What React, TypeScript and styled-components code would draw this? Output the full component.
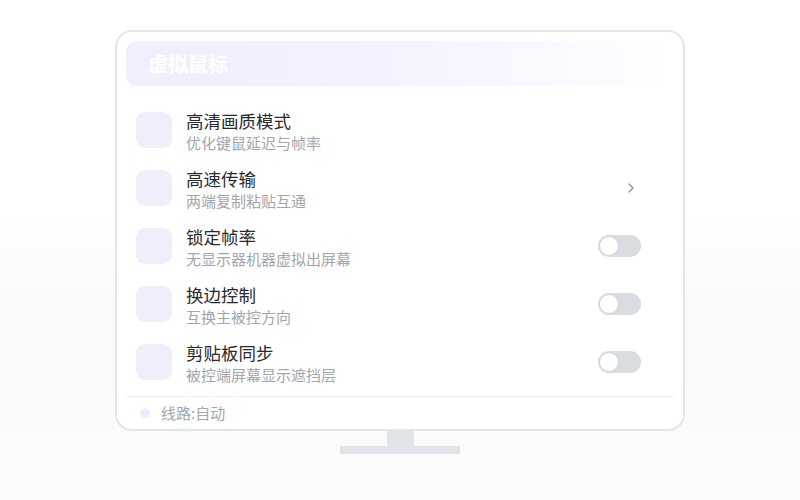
import React from "react";
import styled, { createGlobalStyle } from "styled-components";
import { ChevronRight } from "lucide-react";

const GlobalStyle = createGlobalStyle`
  html, body { margin: 0; padding: 0; }
  body {
    width: 800px;
    height: 500px;
    overflow: hidden;
    font-family: "Noto Sans CJK SC", "Noto Sans", sans-serif;
    background: linear-gradient(180deg, #ffffff 0%, #ffffff 42%, #f9f9fa 62%, #fafafa 85%, #fcfcfc 100%);
  }
`;

const Page = styled.div`
  display: flex;
  flex-direction: column;
  align-items: center;
  padding-top: 30px;
`;

const Monitor = styled.div`
  box-sizing: border-box;
  width: 570px;
  height: 401px;
  border: 2px solid #e3e5e9;
  border-radius: 17px;
  background: #ffffff;
  padding: 9px;
  display: flex;
  flex-direction: column;
`;

const Header = styled.div`
  height: 45px;
  flex: none;
  border-radius: 11px;
  background: linear-gradient(90deg, #f1eefd 0%, #f4f2fe 45%, #faf9ff 80%, #ffffff 100%);
  display: flex;
  align-items: center;
  padding-left: 22px;
`;

const HeaderTitle = styled.div`
  color: #ffffff;
  font-size: 20px;
  font-weight: 700;
`;

const List = styled.div`
  display: flex;
  flex-direction: column;
  padding-top: 15px;
`;

const Row = styled.div`
  height: 58px;
  display: flex;
  align-items: center;
  padding: 0 33px 0 10px;
`;

const IconBox = styled.div`
  width: 36px;
  height: 36px;
  border-radius: 9px;
  background: #f1eefc;
  flex: none;
`;

const TextBlock = styled.div`
  flex: 1;
  margin-left: 14px;
  padding-top: 2px;
  display: flex;
  flex-direction: column;
`;

const Title = styled.div`
  font-size: 17.5px;
  line-height: 24px;
  color: #2a2a2e;
`;

const Subtitle = styled.div`
  font-size: 15px;
  line-height: 20px;
  color: #a2a6ad;
`;

const Trailing = styled.div`
  width: 43px;
  display: flex;
  justify-content: flex-end;
  align-items: center;
  color: #8e949c;
`;

const Chevron = styled(ChevronRight)`
  margin-right: 2px;
`;

const Toggle = styled.div`
  box-sizing: border-box;
  width: 43px;
  height: 22px;
  border-radius: 11px;
  background: #d9dce1;
  padding: 1px;
  display: flex;
  align-items: center;
  flex: none;
`;

const Knob = styled.div`
  box-sizing: border-box;
  width: 20px;
  height: 20px;
  border-radius: 50%;
  background: #ffffff;
  border: 1.5px solid #d2d5db;
`;

const Divider = styled.div`
  height: 1px;
  background: #eef0f3;
  margin-top: 5px;
  flex: none;
`;

const Footer = styled.div`
  flex: 1;
  display: flex;
  align-items: center;
  padding: 5px 0 0 14px;
  gap: 11px;
`;

const Dot = styled.div`
  width: 10px;
  height: 10px;
  border-radius: 50%;
  background: #efebfc;
`;

const FooterText = styled.div`
  font-size: 15px;
  color: #a2a6ad;
`;

const Neck = styled.div`
  width: 27px;
  height: 15px;
  background: #e0e3e7;
`;

const Base = styled.div`
  width: 120px;
  height: 8px;
  background: #e0e3e7;
`;

type Item = { title: string; sub: string; kind: "none" | "chevron" | "toggle" };

const items: Item[] = [
  { title: "高清画质模式", sub: "优化键鼠延迟与帧率", kind: "none" },
  { title: "高速传输", sub: "两端复制粘贴互通", kind: "chevron" },
  { title: "锁定帧率", sub: "无显示器机器虚拟出屏幕", kind: "toggle" },
  { title: "换边控制", sub: "互换主被控方向", kind: "toggle" },
  { title: "剪贴板同步", sub: "被控端屏幕显示遮挡层", kind: "toggle" },
];

export default function App() {
  return (
    <>
      <GlobalStyle />
      <Page>
        <Monitor>
          <Header>
            <HeaderTitle>虚拟鼠标</HeaderTitle>
          </Header>
          <List>
            {items.map((it) => (
              <Row key={it.title}>
                <IconBox />
                <TextBlock>
                  <Title>{it.title}</Title>
                  <Subtitle>{it.sub}</Subtitle>
                </TextBlock>
                <Trailing>
                  {it.kind === "chevron" && <Chevron size={16} strokeWidth={2} />}
                  {it.kind === "toggle" && (
                    <Toggle>
                      <Knob />
                    </Toggle>
                  )}
                </Trailing>
              </Row>
            ))}
          </List>
          <Divider />
          <Footer>
            <Dot />
            <FooterText>线路:自动</FooterText>
          </Footer>
        </Monitor>
        <Neck />
        <Base />
      </Page>
    </>
  );
}
